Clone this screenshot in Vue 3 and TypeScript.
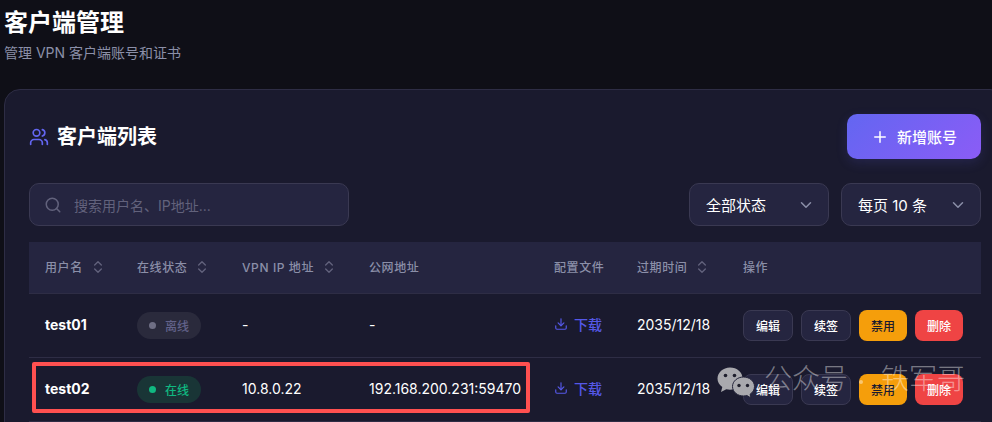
<template>
  <div class="page">
    <div class="page-head">
      <h1>客户端管理</h1>
      <p>管理 VPN 客户端账号和证书</p>
    </div>

    <div class="card">
      <div class="card-head">
        <div class="card-title">
          <svg class="users-icon" viewBox="0 0 24 24" fill="none" stroke="currentColor" stroke-width="2" stroke-linecap="round" stroke-linejoin="round">
            <path d="M16 21v-2a4 4 0 0 0-4-4H6a4 4 0 0 0-4 4v2" />
            <circle cx="9" cy="7" r="4" />
            <path d="M22 21v-2a4 4 0 0 0-3-3.870" />
            <path d="M16 3.130a4 4 0 0 1 0 7.750" />
          </svg>
          <h2>客户端列表</h2>
        </div>
        <button class="add-btn">
          <svg viewBox="0 0 24 24" fill="none" stroke="currentColor" stroke-width="2" stroke-linecap="round">
            <path d="M12 5v14M5 12h14" />
          </svg>
          新增账号
        </button>
      </div>

      <div class="filters">
        <div class="search">
          <svg viewBox="0 0 24 24" fill="none" stroke="currentColor" stroke-width="2" stroke-linecap="round" stroke-linejoin="round">
            <circle cx="11" cy="11" r="8" />
            <path d="m21 21-4.300-4.300" />
          </svg>
          <span>搜索用户名、IP地址...</span>
        </div>
        <div class="selects">
          <div v-for="s in selects" :key="s" class="select">
            <span>{{ s }}</span>
            <svg viewBox="0 0 24 24" fill="none" stroke="currentColor" stroke-width="2" stroke-linecap="round" stroke-linejoin="round">
              <path d="m6 9 6 6 6-6" />
            </svg>
          </div>
        </div>
      </div>

      <div class="table">
        <div class="row header">
          <div v-for="c in columns" :key="c.label" class="cell">
            {{ c.label }}
            <svg v-if="c.sort" class="sort" viewBox="0 0 24 24" fill="none" stroke="currentColor" stroke-width="2" stroke-linecap="round" stroke-linejoin="round">
              <path d="m7 15 5 5 5-5" />
              <path d="m7 9 5-5 5 5" />
            </svg>
          </div>
        </div>
        <div v-for="c in clients" :key="c.name" class="row">
          <div class="cell text name">{{ c.name }}</div>
          <div class="cell">
            <span class="status" :class="{ online: c.online }"><i></i>{{ c.online ? '在线' : '离线' }}</span>
          </div>
          <div class="cell text">{{ c.vpnIp }}</div>
          <div class="cell text">{{ c.publicIp }}</div>
          <div class="cell">
            <a class="download">
              <svg viewBox="0 0 24 24" fill="none" stroke="currentColor" stroke-width="2" stroke-linecap="round" stroke-linejoin="round">
                <path d="M21 15v4a2 2 0 0 1-2 2H5a2 2 0 0 1-2-2v-4" />
                <path d="m7 10 5 5 5-5" />
                <path d="M12 15V3" />
              </svg>
              下载
            </a>
          </div>
          <div class="cell text">{{ c.expire }}</div>
          <div class="cell actions">
            <button class="btn ghost">编辑</button>
            <button class="btn ghost">续签</button>
            <button class="btn warn">禁用</button>
            <button class="btn danger">删除</button>
          </div>
        </div>
      </div>
    </div>

    <!-- 截图上的红框和水印 -->
    <div class="highlight"></div>
    <div class="watermark">
      <svg viewBox="0 0 38 36" width="38" height="36">
        <path class="bubble" d="M13 0.500C6 0.500 0.500 5.500 0.500 11.500c0 3.500 1.800 6.500 4.800 8.600L4 25l5.300-2.700c1.200.3 2.400.5 3.700.5C20 22.800 25.500 17.800 25.500 11.500S20 0.500 13 0.500z" />
        <circle class="eye" cx="8.500" cy="8.500" r="1.800" />
        <circle class="eye" cx="17.500" cy="8.500" r="1.800" />
        <path class="bubble front" d="M37.500 19.500c0-5.300-5-9.500-11-9.500s-11 4.200-11 9.500 5 9.500 11 9.500c1.200 0 2.300-.2 3.400-.5L34 31l-.9-3.800c2.700-1.700 4.400-4.500 4.400-7.700z" />
        <circle class="eye" cx="22" cy="18.500" r="1.700" />
        <circle class="eye" cx="30.500" cy="18.500" r="1.700" />
      </svg>
      <span class="mark-text">公众号</span>
      <i class="mark-dot"></i>
      <span class="mark-text">铁军哥</span>
    </div>
  </div>
</template>

<script setup lang="ts">
interface Column {
  label: string;
  sort: boolean;
}

interface Client {
  name: string;
  online: boolean;
  vpnIp: string;
  publicIp: string;
  expire: string;
}

const selects = ['全部状态', '每页 10 条'];

const columns: Column[] = [
  { label: '用户名', sort: true },
  { label: '在线状态', sort: true },
  { label: 'VPN IP 地址', sort: true },
  { label: '公网地址', sort: false },
  { label: '配置文件', sort: false },
  { label: '过期时间', sort: true },
  { label: '操作', sort: false }
];

const clients: Client[] = [
  { name: 'test01', online: false, vpnIp: '-', publicIp: '-', expire: '2035/12/18' },
  { name: 'test02', online: true, vpnIp: '10.8.0.22', publicIp: '192.168.200.231:59470', expire: '2035/12/18' }
];
</script>

<style>
html,
body {
  margin: 0;
  background: #0f0f17;
  overflow: hidden;
}
</style>

<style scoped>
.page {
  position: relative;
  width: 992px;
  height: 422px;
  overflow: hidden;
  padding-left: 4px;
  box-sizing: border-box;
  background: #0f0f17;
  color: #fff;
  font-family: Inter, "Noto Sans CJK SC", sans-serif;
}

.page-head {
  height: 89px;
}

h1 {
  margin: 0;
  padding-top: 6px;
  font-size: 24px;
  line-height: 34px;
  font-weight: 700;
}

.page-head p {
  margin: 3px 0 0;
  font-size: 14px;
  line-height: 20px;
  color: #8b8fa8;
}

.card {
  width: 1002px;
  height: 400px;
  box-sizing: border-box;
  padding: 24px;
  background: #1a1a2e;
  border: 1px solid #2e2d45;
  border-radius: 16px;
}

.card-head {
  display: flex;
  justify-content: space-between;
  align-items: center;
  margin-bottom: 24px;
}

.card-title {
  display: flex;
  align-items: center;
  gap: 8px;
}

.users-icon {
  width: 20px;
  height: 20px;
  color: #6366f1;
}

h2 {
  margin: 0;
  font-size: 20px;
  line-height: 28px;
  font-weight: 600;
}

.add-btn {
  display: flex;
  align-items: center;
  justify-content: center;
  gap: 8px;
  width: 134px;
  height: 45px;
  border: none;
  border-radius: 10px;
  background: linear-gradient(135deg, #6366f1, #8b5cf6);
  box-shadow: 0 4px 12px rgba(99, 102, 241, 0.15);
  color: #fff;
  font: 500 15px Inter, "Noto Sans CJK SC", sans-serif;
}

.add-btn svg {
  width: 18px;
  height: 18px;
}

.filters {
  display: flex;
  justify-content: space-between;
  margin-bottom: 16px;
}

.search,
.select {
  display: flex;
  align-items: center;
  height: 43px;
  box-sizing: border-box;
  background: #252540;
  border: 1px solid #3a3952;
  border-radius: 10px;
}

.search {
  width: 320px;
  padding-left: 14px;
  gap: 12px;
  font-size: 14px;
  color: #62627c;
}

.search svg {
  width: 18px;
  height: 18px;
}

.selects {
  display: flex;
  gap: 12px;
}

.select {
  width: 140px;
  padding: 0 13px 0 16px;
  justify-content: space-between;
  font-size: 15px;
}

.select svg {
  width: 18px;
  height: 18px;
  color: #8b8fa8;
}

.row {
  display: grid;
  grid-template-columns: 92px 105px 127px 185px 83px 106px 254px;
  height: 64px;
  border-bottom: 1px solid #2e2d45;
  box-sizing: border-box;
  font-size: 14px;
}

.row.header {
  height: 52px;
  background: #252540;
  color: #8b8fa8;
  font-size: 12px;
  font-weight: 500;
  letter-spacing: 0.6px;
  padding-bottom: 2px;
}

.cell {
  display: flex;
  align-items: center;
  padding-left: 16px;
  white-space: nowrap;
}

.cell.text {
  padding-bottom: 2px;
}

.sort {
  width: 16px;
  height: 16px;
  margin-left: 7px;
  color: #62627c;
}

.name {
  font-weight: 700;
}

.status {
  display: inline-flex;
  align-items: center;
  height: 27px;
  box-sizing: border-box;
  padding: 0 12px 1px;
  border-radius: 14px;
  background: #2a2a3c;
  color: #62628a;
  font-size: 12px;
  font-weight: 500;
}

.status i {
  width: 7px;
  height: 7px;
  margin-right: 9px;
  border-radius: 50%;
  background: #6f6f85;
}

.status.online {
  background: #193536;
  color: #10b981;
}

.status.online i {
  background: #10b981;
}

.download {
  display: inline-flex;
  align-items: center;
  gap: 6px;
  margin-bottom: 4px;
  color: #5558e8;
  font-size: 14px;
  font-weight: 500;
}

.download svg {
  width: 14px;
  height: 14px;
  margin-top: 1px;
}

.actions {
  gap: 8px;
}

.btn {
  height: 31px;
  padding: 0;
  border-radius: 8px;
  font: 500 12px Inter, "Noto Sans CJK SC", sans-serif;
  box-sizing: border-box;
}

.ghost {
  width: 50px;
  background: #252540;
  border: 1px solid #3a3952;
  color: #fff;
}

.warn {
  width: 48px;
  background: #f59e0b;
  border: none;
  color: #1a1a2e;
}

.danger {
  width: 48px;
  background: #ef4444;
  border: none;
  color: #fff;
}

.highlight {
  position: absolute;
  left: 32px;
  top: 362px;
  width: 498px;
  height: 51px;
  box-sizing: border-box;
  border: 4px solid #ff5050;
  border-radius: 2px;
}

.watermark {
  position: absolute;
  left: 717px;
  top: 367px;
  display: flex;
  align-items: flex-start;
  height: 36px;
  white-space: nowrap;
}

.watermark svg {
  margin-right: 9px;
}

.mark-text {
  color: rgba(255, 255, 255, 0.42);
  font-size: 28px;
  line-height: 28px;
  margin-top: -2px;
  font-weight: 300;
}

.mark-dot {
  width: 4px;
  height: 4px;
  margin: 13px 18px 0 11px;
  border-radius: 50%;
  background: rgba(255, 255, 255, 0.42);
}

.bubble {
  fill: #a9a9ae;
}

.bubble.front {
  stroke: #24243a;
  stroke-width: 1;
}

.eye {
  fill: #1e1e2c;
}
</style>
